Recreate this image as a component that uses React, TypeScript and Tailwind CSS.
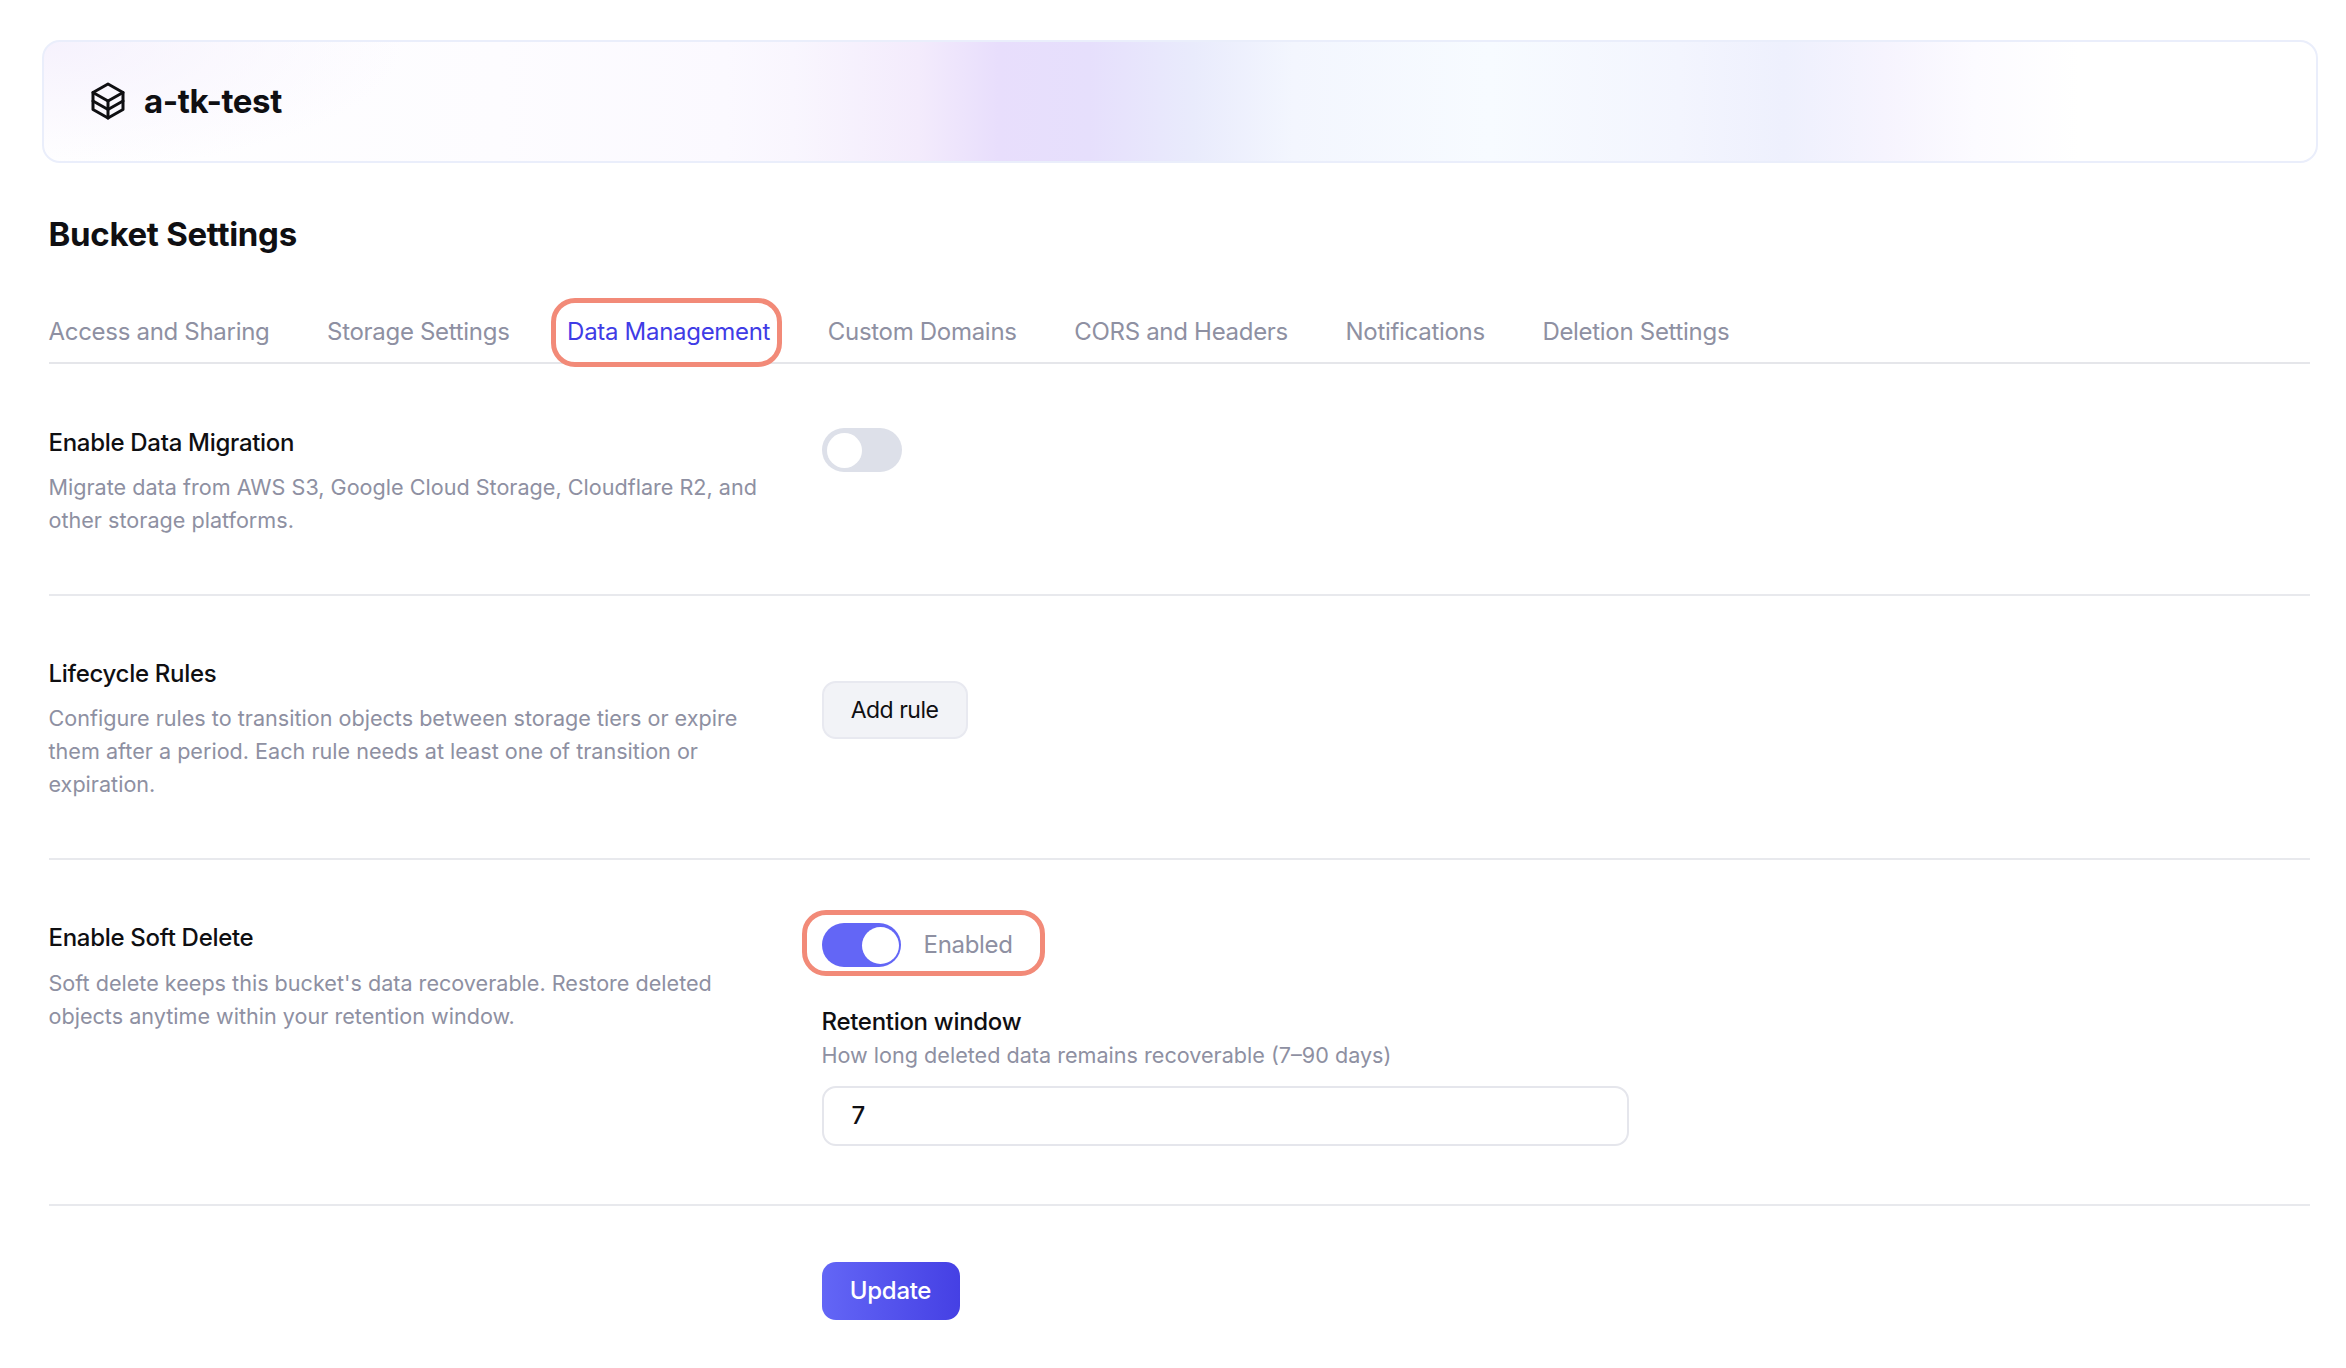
import React from 'react'

const tabs = [
  'Access and Sharing',
  'Storage Settings',
  'Data Management',
  'Custom Domains',
  'CORS and Headers',
  'Notifications',
  'Deletion Settings',
]

function BucketIcon() {
  return (
    <svg width="36" height="38" viewBox="0 0 36 38" fill="none" stroke="#0f0f12" strokeWidth="3" strokeLinejoin="round" strokeLinecap="round">
      <path d="M18 2 L33 10.5 V27.5 L18 36 L3 27.5 V10.5 Z" />
      <path d="M3 10.5 L18 19 L33 10.5" />
      <path d="M3 19 L18 27.5 L33 19" />
      <path d="M18 19 V36" />
    </svg>
  )
}

function Ring({ className }: { className: string }) {
  return <span className={`absolute border-[5px] border-[#f28a78] pointer-events-none ${className}`}></span>
}

export default function App() {
  return (
    <div className="min-h-[1368px] bg-white pt-[40px] pl-[42px] pr-[28px] font-['Inter',sans-serif] text-[24px] leading-[36px] tracking-[-0.3px] text-[#0f0f12]">
      <div className="relative h-[123px] flex items-center gap-[18px] pl-[46px] pb-[2px] rounded-[18px] border-2 border-[#eaeefb] bg-[radial-gradient(ellipse_360px_130px_at_0%_0%,#f6f2fd,transparent),linear-gradient(90deg,#ffffff_0%,#fdfcff_20%,#fbf9ff_30%,#f9f6fe_33%,#f3ebfc_38.5%,#e8defc_42%,#e6dffc_46%,#e9ebfc_50.6%,#f3f6fe_55%,#f7fbff_63.6%,#f3f5fe_72%,#eef0fd_76.6%,#f6f4fe_81%,#fcfbff_85%,#ffffff_89.6%)]">
        <BucketIcon />
        <span className="text-[33px] font-bold tracking-[-0.4px]">a-tk-test</span>
      </div>

      <div className="pl-[6.5px] pr-[8px]">
        <h1 className="mt-[48px] text-[33px] leading-[46px] font-bold tracking-[-0.3px]">Bucket Settings</h1>

        <div className="mt-[57px] pb-[12px] flex gap-[57.6px] border-b-2 border-[#e5e6ea] text-[#8e90a2]">
          {tabs.map((tab) => (
            <div key={tab} className={tab === 'Data Management' ? 'relative text-[#3f3ce6]' : 'relative'}>
              {tab}
              {tab === 'Data Management' && <Ring className="-left-[16px] -right-[12px] -top-[16px] -bottom-[17px] rounded-[24px]" />}
            </div>
          ))}
        </div>

        <section className="grid grid-cols-[773px_1fr] pt-[61px] pb-[57px] border-b-2 border-[#e8e9ed]">
          <div>
            <div className="font-medium">Enable Data Migration</div>
            <p className="mt-[9.5px] w-[725px] text-[21.6px] leading-[33px] tracking-normal text-[#8e90a2]">
              Migrate data from AWS S3, Google Cloud Storage, Cloudflare R2, and other storage platforms.
            </p>
          </div>
          <div className="pt-[3px]">
            <div className="w-[80px] h-[44px] rounded-full bg-[#dde0e9] pl-[5px] flex items-center">
              <div className="w-[35px] h-[35px] rounded-full bg-white"></div>
            </div>
          </div>
        </section>

        <section className="grid grid-cols-[773px_1fr] pt-[60px] pb-[57px] border-b-2 border-[#e8e9ed]">
          <div>
            <div className="font-medium">Lifecycle Rules</div>
            <p className="mt-[10px] w-[725px] text-[21.6px] leading-[33px] tracking-normal text-[#8e90a2]">
              Configure rules to transition objects between storage tiers or expire them after a period. Each rule needs at least one of transition or expiration.
            </p>
          </div>
          <div className="pt-[25.5px]">
            <button className="w-[146px] h-[58px] rounded-[14px] border-2 border-[#e8e9f0] bg-[#f2f3f7] font-normal text-[23px] tracking-[-0.5px]">Add rule</button>
          </div>
        </section>

        <section className="grid grid-cols-[773px_1fr] pt-[60.5px] pb-[57.5px] border-b-2 border-[#e8e9ed]">
          <div>
            <div className="font-medium">Enable Soft Delete</div>
            <p className="mt-[11px] w-[725px] text-[21.6px] leading-[33px] tracking-normal text-[#8e90a2]">
              Soft delete keeps this bucket's data recoverable. Restore deleted objects anytime within your retention window.
            </p>
          </div>
          <div className="pt-[3px]">
            <div className="relative inline-flex items-center gap-[23px]">
              <div className="w-[79px] h-[44px] rounded-full bg-[#6366f6] pr-[2px] flex items-center justify-end">
                <div className="w-[37px] h-[37px] rounded-full bg-white"></div>
              </div>
              <span className="text-[#8e90a2]">Enabled</span>
              <Ring className="-left-[20px] -right-[32px] -top-[13px] -bottom-[9px] rounded-[24px]" />
            </div>
            <div className="mt-[30.5px] font-medium">Retention window</div>
            <div className="-mt-[1px] text-[21.6px] leading-[33px] tracking-normal text-[#8e90a2]">How long deleted data remains recoverable (7–90 days)</div>
            <div className="mt-[14px] w-[807px] h-[60px] flex items-center px-[28px] rounded-[14px] border-2 border-[#e5e6ec] font-medium">7</div>
          </div>
        </section>

        <div className="grid grid-cols-[773px_1fr] pt-[56.5px]">
          <div></div>
          <div>
            <button className="w-[138px] h-[58px] rounded-[14px] bg-[linear-gradient(90deg,#6366f6,#4540e4)] text-white font-medium">Update</button>
          </div>
        </div>
      </div>
    </div>
  )
}
